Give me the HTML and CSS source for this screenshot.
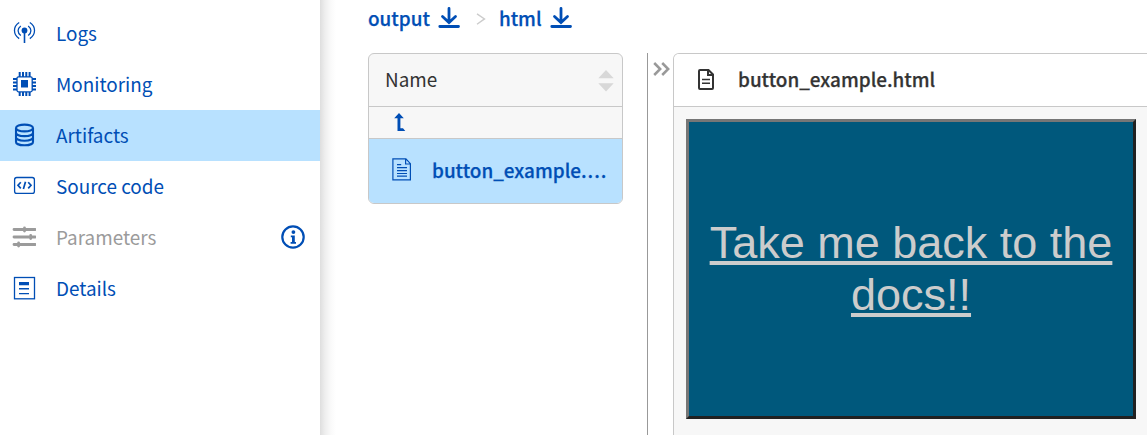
FILE: index.html
```html
<!DOCTYPE html>
<html lang="en">
<head>
<meta charset="utf-8">
<title>Artifacts</title>
<link rel="stylesheet" href="styles.css">
</head>
<body>
<div class="app">
  <nav class="sidebar">
    <a class="nav-item">
      <svg class="nav-icon" viewBox="0 0 24 24"><g fill="none" stroke="currentColor" stroke-width="1.3"><path d="M7.200 1.500C.9 5.500.9 13.500 7.200 17.600M17.800 1.500C24.100 5.500 24.100 13.500 17.800 17.600M8.800 5C5.200 7.600 5.200 11.900 8.800 14.500M16.200 5C19.800 7.600 19.800 11.900 16.200 14.500"/></g><circle cx="12.500" cy="9.500" r="2.900" fill="currentColor"/><path d="M11.700 10h1.600v12h-1.600z" fill="currentColor"/></svg>
      <span>Logs</span>
    </a>
    <a class="nav-item">
      <svg class="nav-icon" viewBox="0 0 24 24"><rect x="5" y="4.800" width="15.200" height="15" rx="1.500" fill="none" stroke="currentColor" stroke-width="1.300"/><path d="M9 8h7v7.500H9z" fill="currentColor"/><path d="M7.700 0v5M11 0v5M14.300 0v5M17.600 0v5M7.700 20v4M11 20v4M14.300 20v4M17.600 20v4M1 7h4M1 10.500h4M1 14h4M1 17.500h4M20 7h4M20 10.500h4M20 14h4M20 17.500h4" stroke="currentColor" stroke-width="2"/></svg>
      <span>Monitoring</span>
    </a>
    <a class="nav-item nav-item-active">
      <svg class="nav-icon" viewBox="0 0 24 24"><g fill="none" stroke="currentColor" stroke-width="2.100"><ellipse cx="12.500" cy="5" rx="8.500" ry="3.400"/><path d="M4 5v13.900c0 2 3.800 3.400 8.500 3.400s8.500-1.400 8.500-3.400V5M4 9.700c0 2 3.800 3.400 8.500 3.400s8.500-1.400 8.500-3.400M4 14.300c0 2 3.800 3.400 8.500 3.400s8.500-1.400 8.500-3.400"/></g></svg>
      <span>Artifacts</span>
    </a>
    <a class="nav-item">
      <svg class="nav-icon" viewBox="0 0 24 24"><g fill="none" stroke="currentColor"><rect x="2.600" y="3.500" width="19.800" height="15.900" rx="2.200" stroke-width="1.300"/><path d="M8.800 8.200L6 11.300l2.800 3M16.200 8.200L19 11.300l-2.800 3M13.500 7.700l-2.100 7.400" stroke-width="1.700"/></g></svg>
      <span>Source code</span>
    </a>
    <a class="nav-item nav-item-disabled">
      <svg class="nav-icon" viewBox="0 0 24 24"><g stroke="currentColor" stroke-width="2.800" stroke-linecap="round"><path d="M2 4.500h21.300M2 12h21.300M2 19.500h21.300"/><path d="M12.500 3v3M18.700 10.500v3M6.600 18v3"/></g></svg>
      <span>Parameters</span>
      <svg class="info-icon" viewBox="0 0 24 24"><circle cx="12" cy="12" r="10.700" fill="none" stroke="currentColor" stroke-width="2.200"/><circle cx="12.400" cy="7.100" r="1.900" fill="currentColor"/><path d="M9.800 10.500h4v6.500h1.200v1.800H9.600V17h1.400v-4.700H9.800z" fill="currentColor"/></svg>
    </a>
    <a class="nav-item">
      <svg class="nav-icon" viewBox="0 0 24 24"><rect x="2.500" y="1.500" width="20" height="21.300" fill="none" stroke="currentColor" stroke-width="1.300"/><path d="M7 6h10v3.200H7zM7 12h10v1.500H7zM7 17h10v1.300H7z" fill="currentColor"/></svg>
      <span>Details</span>
    </a>
  </nav>
  <main class="content">
    <div class="breadcrumb">
      <a class="crumb">output</a>
      <svg class="download" viewBox="0 0 22 22"><path d="M11 1.500v14M4.500 9.500L11 15.500l6.500-6M1.800 19.500h18.700" fill="none" stroke="currentColor" stroke-width="2.800" stroke-linecap="round"/></svg>
      <svg class="separator" viewBox="0 0 10 12"><path d="M1 .8l7.500 5.100L1 11.200" fill="none" stroke="currentColor" stroke-width="1.400"/></svg>
      <a class="crumb">html</a>
      <svg class="download" viewBox="0 0 22 22"><path d="M11 1.500v14M4.500 9.500L11 15.500l6.500-6M1.800 19.500h18.700" fill="none" stroke="currentColor" stroke-width="2.800" stroke-linecap="round"/></svg>
    </div>
    <div class="browser">
      <section class="file-table">
        <div class="table-header">
          <span>Name</span>
          <svg class="sort" viewBox="0 0 16 22"><path d="M8 0l7.700 8.300H.3zM.3 13.300h15.400L8 21.500z" fill="currentColor"/></svg>
        </div>
        <div class="row-up">
          <svg class="up-icon" viewBox="0 0 12 18"><path d="M5 0l4.800 5.200H6.400V15.200H9l2.300 2.700H3.500V5.200H.2z" fill="currentColor"/></svg>
        </div>
        <div class="row-file">
          <svg class="file-icon" viewBox="0 0 20 23"><g fill="none" stroke="currentColor" stroke-width="1.200"><path d="M.9.900h13l4.500 4.800v16.200H.9zM13.600 1v5h4.800"/><path d="M5 6.700h4.200M5 9.700h10M5 12.600h10M5 15.500h10M5 18.200h10"/></g></svg>
          <span class="file-name">button_example.<span class="ellipsis">...</span></span>
        </div>
      </section>
      <div class="divider">
        <svg class="collapse" viewBox="0 0 17 14"><path d="M1.200 1l6 6-6 6M9.200 1l6 6-6 6" fill="none" stroke="currentColor" stroke-width="2.500"/></svg>
      </div>
      <section class="preview">
        <header class="preview-header">
          <svg class="doc-icon" viewBox="0 0 16 21"><g fill="none" stroke="currentColor" stroke-width="2"><path d="M2 1h8.500L15 5.500V19a1 1 0 0 1-1 1H2a1 1 0 0 1-1-1V2a1 1 0 0 1 1-1zM10 1v5h5"/><path d="M4 10.500h8M4 14.200h8" stroke-width="1.600"/></g></svg>
          <span>button_example.html</span>
        </header>
        <div class="preview-body">
          <button class="docs-button"><span class="docs-link">Take me back to the docs!!</span></button>
        </div>
      </section>
    </div>
  </main>
</div>
</body>
</html>
```
FILE: styles.css
```css
* { box-sizing: border-box; }
body {
  margin: 0;
  background: #fff;
  color: #333;
  font-family: "Noto Sans CJK SC", sans-serif;
  font-size: 18.9px;
  line-height: 28px;
}
svg { display: block; flex: none; }
.app { display: flex; height: 435px; overflow: hidden; }
.sidebar { width: 320px; flex: none; padding-top: 8px; color: #004eb5; }
.nav-item {
  display: flex;
  align-items: center;
  height: 51px;
  padding: 0 15px 1px 12px;
}
.nav-item > span { padding-bottom: 1px; }
.nav-item-active { background: #b8e1ff; }
.nav-item-disabled { color: #9b9b9b; }
.nav-icon { width: 24px; height: 24px; margin-right: 20px; }
.info-icon { width: 24px; height: 24px; margin-left: auto; color: #004eb5; }
.content {
  flex: 1;
  min-width: 0;
  padding-left: 48px;
  background: linear-gradient(to right, #dedede, #eee 5px, #fafafa 11px, #fff 16px);
}
.breadcrumb {
  display: flex;
  align-items: center;
  height: 53px;
  padding-bottom: 17px;
  color: #004eb5;
}
.crumb, .file-name, .preview-header { font-weight: 500; -webkit-text-stroke: 0.25px currentColor; }
.download { width: 22px; height: 22px; margin: 0 0 1px 8px; }
.separator { width: 10px; height: 12px; margin: 2px 13px 0 16px; color: #ccc; }
.browser { display: flex; width: 800px; height: 382px; }
.file-table {
  width: 255px;
  height: 151px;
  border: 1px solid #c8c8c8;
  border-radius: 6px;
  overflow: hidden;
  background: #f7f7f7;
}
.table-header {
  display: flex;
  align-items: center;
  justify-content: space-between;
  height: 53px;
  padding: 0 8px 2px 16px;
  border-bottom: 1px solid #c8c8c8;
}
.sort { width: 16px; height: 22px; margin-top: 3px; color: #d8d8d8; }
.row-up {
  display: flex;
  align-items: center;
  height: 32px;
  padding: 0 0 2px 25px;
  border-bottom: 1px solid #c8c8c8;
  color: #004eb5;
}
.up-icon { width: 12px; height: 18px; }
.row-file {
  display: flex;
  align-items: center;
  gap: 20px;
  height: 64px;
  padding: 0 8px 2px 23px;
  background: #b8e1ff;
  color: #004eb5;
}
.file-icon { width: 20px; height: 23px; margin-bottom: 2px; }
.file-name { flex: 1; min-width: 0; white-space: nowrap; }
.ellipsis { margin-left: 1px; letter-spacing: 1px; }
.divider { width: 26px; margin-left: 24px; padding: 9px 0 0 5px; border-left: 1px solid #999; color: #999; }
.collapse { width: 17px; height: 14px; }
.preview { flex: 1; border: 1px solid #c8c8c8; border-bottom: 0; border-top-left-radius: 6px; background: #f7f7f7; }
.preview-header {
  display: flex;
  align-items: center;
  gap: 24px;
  height: 53px;
  padding: 0 0 2px 24px;
  border-bottom: 1px solid #c8c8c8;
  border-top-left-radius: 5px;
  background: #fff;
}
.doc-icon { width: 16px; height: 21px; }
.preview-body { padding: 12px; }
.docs-button {
  display: block;
  width: 450px;
  height: 300px;
  padding: 0 6px;
  border: 3px solid;
  border-color: #767676 #212121 #212121 #767676;
  background: #00587c;
  color: #ccc;
  font: 45px/52px "Liberation Sans", Arial, sans-serif;
}
.docs-link { text-decoration: underline; text-decoration-thickness: 4px; text-underline-offset: 3px; text-decoration-skip-ink: none; }
```
